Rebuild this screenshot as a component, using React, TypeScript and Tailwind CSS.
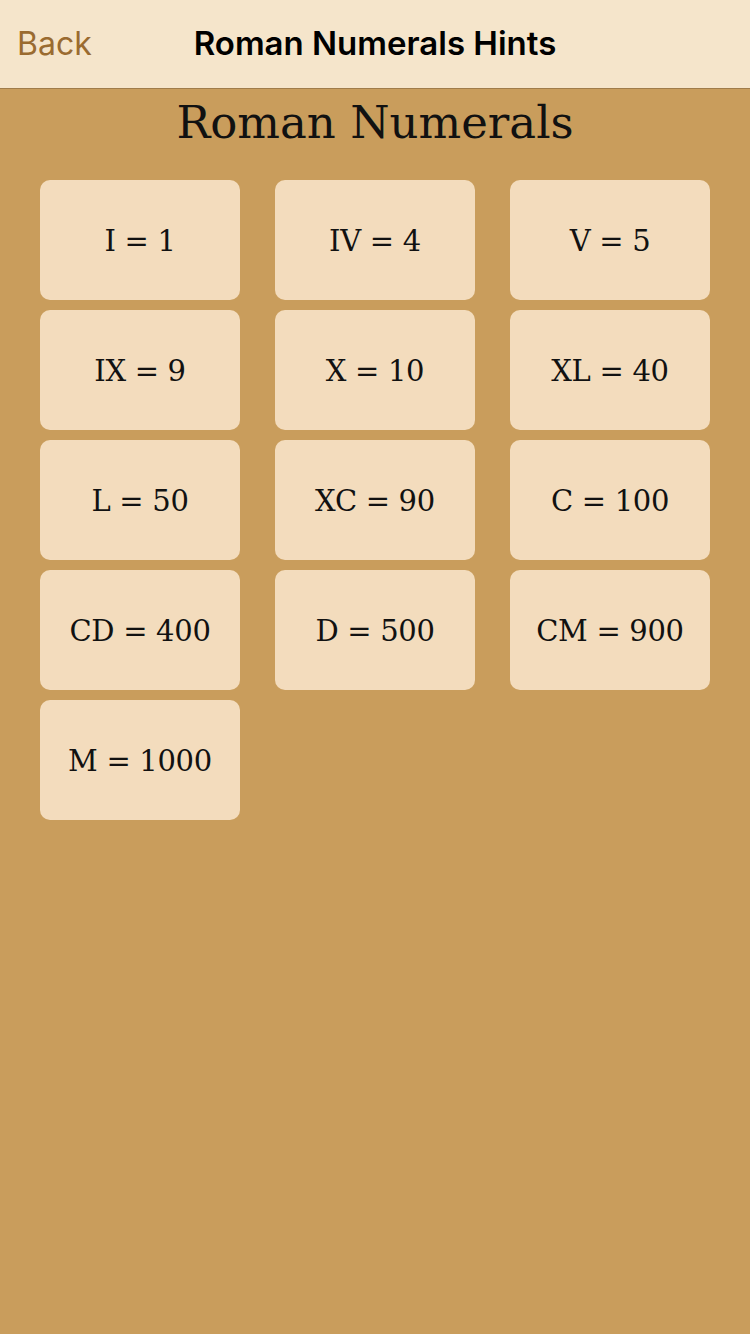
const hints = [
  "I = 1",
  "IV = 4",
  "V = 5",
  "IX = 9",
  "X = 10",
  "XL = 40",
  "L = 50",
  "XC = 90",
  "C = 100",
  "CD = 400",
  "D = 500",
  "CM = 900",
  "M = 1000",
]

export default function App() {
  return (
    <div className="flex min-h-[1334px] w-[750px] flex-col bg-[#c99d5c]">
      <header className="relative flex h-[89px] items-center justify-center border-b border-[#a07c4a] bg-[#f5e5cb] font-['Inter',sans-serif]">
        <button className="absolute left-[17px] top-[24px] text-[32px] leading-[40px] text-[#9a6b30]">
          Back
        </button>
        <h1 className="text-[33px] font-semibold tracking-[0px] text-black">
          Roman Numerals Hints
        </h1>
      </header>

      <h2 className="flex h-[91px] items-start justify-center pt-[6px] font-['DejaVu_Serif',serif] text-[45px] leading-[56px] text-[#111]">
        Roman Numerals
      </h2>

      <div className="grid grid-cols-[200px_200px_200px] gap-x-[35px] gap-y-[10px] px-[40px]">
        {hints.map((h) => (
          <div
            key={h}
            className="flex h-[120px] items-center justify-center rounded-[10px] bg-[#f3dcbd] pt-[3px] font-['DejaVu_Serif',serif] text-[29px] tracking-[-0.3px] text-[#111]"
          >
            {h}
          </div>
        ))}
      </div>
    </div>
  )
}
